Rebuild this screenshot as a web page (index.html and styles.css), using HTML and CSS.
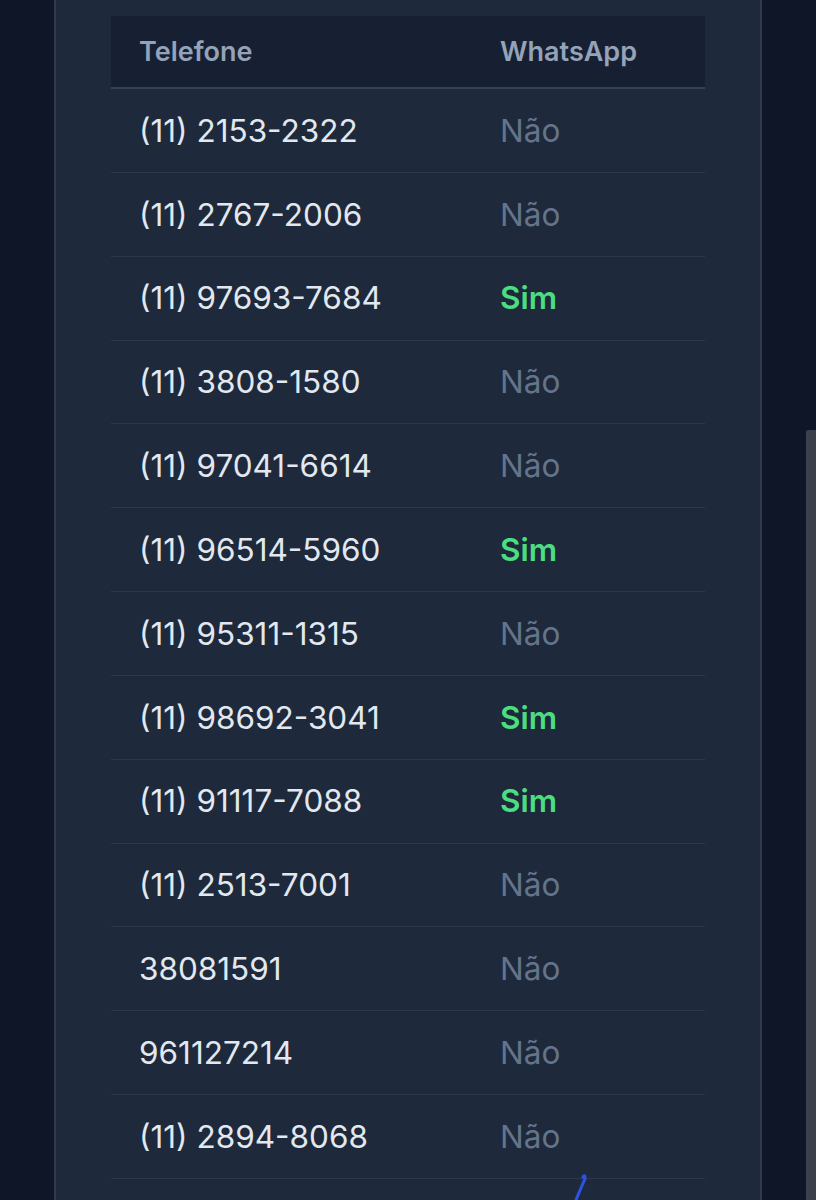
FILE: index.html
```html
<!DOCTYPE html>
<html lang="pt-BR">
<head>
<meta charset="utf-8">
<title>Telefones</title>
<link rel="stylesheet" href="styles.css">
</head>
<body>
<div class="page">
  <section class="card">
    <div class="table">
      <div class="row head">
        <div class="cell">Telefone</div>
        <div class="cell">WhatsApp</div>
      </div>
      <div class="row"><div class="cell phone">(11) 2153-2322</div><div class="cell no">Não</div></div>
      <div class="row"><div class="cell phone">(11) 2767-2006</div><div class="cell no">Não</div></div>
      <div class="row"><div class="cell phone">(11) 97693-7684</div><div class="cell yes">Sim</div></div>
      <div class="row"><div class="cell phone">(11) 3808-1580</div><div class="cell no">Não</div></div>
      <div class="row"><div class="cell phone">(11) 97041-6614</div><div class="cell no">Não</div></div>
      <div class="row"><div class="cell phone">(11) 96514-5960</div><div class="cell yes">Sim</div></div>
      <div class="row"><div class="cell phone">(11) 95311-1315</div><div class="cell no">Não</div></div>
      <div class="row"><div class="cell phone">(11) 98692-3041</div><div class="cell yes">Sim</div></div>
      <div class="row"><div class="cell phone">(11) 91117-7088</div><div class="cell yes">Sim</div></div>
      <div class="row"><div class="cell phone">(11) 2513-7001</div><div class="cell no">Não</div></div>
      <div class="row"><div class="cell phone">38081591</div><div class="cell no">Não</div></div>
      <div class="row"><div class="cell phone">961127214</div><div class="cell no">Não</div></div>
      <div class="row"><div class="cell phone">(11) 2894-8068</div><div class="cell no">Não</div></div>
      <div class="row"><div class="cell phone">&nbsp;</div><div class="cell no">&nbsp;</div></div>
    </div>
  </section>
</div>
<div class="scroll-thumb"></div>
<svg class="pen" width="40" height="40" viewBox="0 0 40 40"><path d="M21 5 C 23 2, 24 5, 22 9 C 20 14, 17 20, 14 28" fill="none" stroke="#2d52e6" stroke-width="3" stroke-linecap="round"/></svg>
</body>
</html>
```
FILE: styles.css
```css
html, body {
  margin: 0;
  padding: 0;
  height: 1200px;
  overflow: hidden;
  background: #0e1628;
  font-family: Inter, "Noto Sans", sans-serif;
}
.page {
  padding-left: 54px;
  height: 1200px;
  overflow: hidden;
}
.card {
  width: 708px;
  height: 1200px;
  overflow: hidden;
  background: #1e293b;
  border-left: 2px solid #2e3a4d;
  border-right: 2px solid #2e3a4d;
  padding: 16px 55px 0 55px;
  box-sizing: border-box;
}
.table {
  width: 594px;
}
.row {
  display: grid;
  grid-template-columns: 361px 1fr;
  height: 83.85px;
  align-items: center;
  border-bottom: 1.5px solid #2c374a;
  box-sizing: border-box;
}
.row.head {
  height: 73px;
  background: #172033;
  border-bottom: 2px solid #344156;
}
.cell {
  padding-left: 28px;
  font-size: 31.5px;
  line-height: 1;
}
.head .cell {
  color: #94a3b8;
  font-weight: 600;
  font-size: 27px;
}
.phone { color: #e2e8f0; }
.no { color: #64748b; }
.yes { color: #4ade80; font-weight: 600; }
.scroll-thumb {
  position: absolute;
  left: 806px;
  top: 430px;
  width: 10px;
  height: 770px;
  background: #3c404b;
  border-radius: 2px 0 0 0;
}
.pen {
  position: absolute;
  left: 562px;
  top: 1172px;
}
```
